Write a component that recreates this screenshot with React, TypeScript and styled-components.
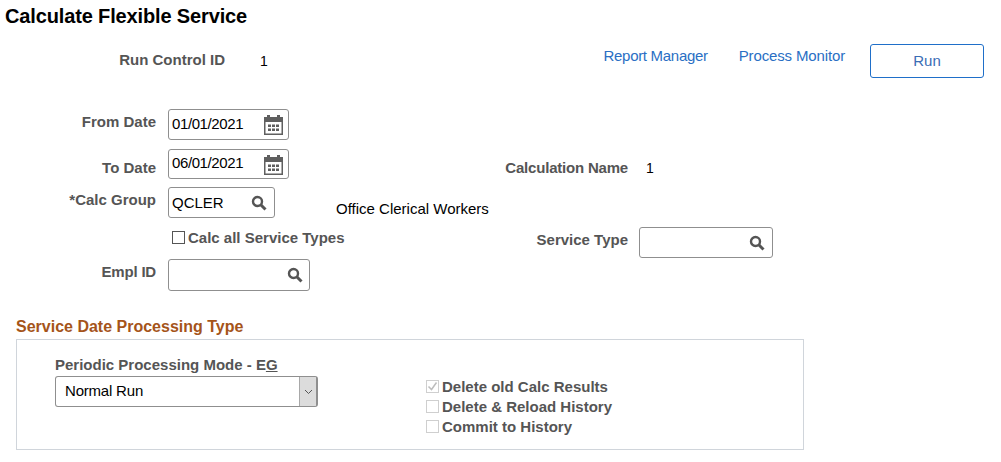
import React from "react";
import styled, { createGlobalStyle } from "styled-components";

const Global = createGlobalStyle`
  html, body { margin: 0; padding: 0; background: #fff; }
  body { font-family: "Liberation Sans", Arial, sans-serif; font-size: 15px; color: #000; }
`;

const Page = styled.div`
  width: 1001px;
  height: 462px;
  overflow: hidden;
  display: flex;
  flex-direction: column;
`;

const Title = styled.h1`
  margin: 0;
  padding: 6px 0 0 5px;
  height: 44px;
  box-sizing: border-box;
  font-size: 20px;
  line-height: 21px;
  font-weight: 700;
  letter-spacing: -0.14px;
  color: #000;
`;

const HeaderRow = styled.div`
  display: grid;
  grid-template-columns: 237px 1fr auto auto auto;
  height: 65px;
  padding-right: 17px;
`;

const HeaderLabel = styled.div`
  padding: 8px 12px 0 0;
  line-height: 16px;
  font-weight: 700;
  color: #555;
  text-align: right;
  white-space: nowrap;
`;

const HeaderValue = styled.div`
  padding: 8px 0 0 23px;
  line-height: 18px;
  font-size: 14px;
`;

const ReportLink = styled.a<{ $gap: number; $tight: number }>`
  color: #2a6fc4;
  line-height: 16px;
  padding-top: 4px;
  margin-right: ${(p) => p.$gap}px;
  letter-spacing: ${(p) => p.$tight}px;
  text-decoration: none;
`;

const RunButton = styled.button`
  width: 114px;
  height: 34px;
  box-sizing: border-box;
  border: 1px solid #1f6fc9;
  border-radius: 3px;
  background: #fff;
  color: #3a6db5;
  font: 15px "Liberation Sans", Arial, sans-serif;
  padding: 0 0 2px;
`;

const FormGrid = styled.div`
  display: grid;
  grid-template-columns: 168px 168px 303px 1fr;
  grid-template-rows: 40px 38px 40px 32px 31px;
`;

const FieldLabel = styled.label<{ $top: number; $right?: number; $tight?: number }>`
  padding: ${(p) => p.$top}px ${(p) => p.$right ?? 12}px 0 0;
  line-height: 16px;
  font-weight: 700;
  color: #555;
  text-align: right;
  white-space: nowrap;
  letter-spacing: ${(p) => p.$tight ?? 0}px;
`;

const FieldBox = styled.div<{ $width: number; $height?: number; $pad: number }>`
  width: ${(p) => p.$width}px;
  height: ${(p) => p.$height ?? 31}px;
  box-sizing: border-box;
  display: flex;
  align-items: center;
  border: 1px solid #8f8f8f;
  border-radius: 3px;
  background: #fff;
  padding-right: ${(p) => p.$pad}px;
`;

const FieldInput = styled.input<{ $tight?: number; $lift?: number }>`
  flex: 1;
  min-width: 0;
  border: 0;
  outline: 0;
  padding: 0 0 ${(p) => p.$lift ?? 0}px 3px;
  background: transparent;
  color: #000;
  font: 15px "Liberation Sans", Arial, sans-serif;
  letter-spacing: ${(p) => p.$tight ?? 0}px;
`;

const Note = styled.div<{ $top: number; $left?: number; $size?: number }>`
  padding: ${(p) => p.$top}px 0 0 ${(p) => p.$left ?? 0}px;
  line-height: 16px;
  font-size: ${(p) => p.$size ?? 15}px;
  white-space: nowrap;
`;

const CheckRow = styled.label<{ $left?: number }>`
  display: flex;
  align-items: center;
  gap: 3px;
  height: 20px;
  padding-left: ${(p) => p.$left ?? 0}px;
  font-weight: 700;
  color: #555;
  white-space: nowrap;
`;

const CheckBox = styled.span<{ $disabled?: boolean }>`
  width: 13px;
  height: 13px;
  box-sizing: border-box;
  flex: none;
  border: 1px solid ${(p) => (p.$disabled ? "#cfcfcf" : "#555")};
  background: #fff;
  display: flex;
`;

const SectionTitle = styled.h2`
  margin: 0;
  padding: 29px 0 0 16px;
  font-size: 16px;
  line-height: 16px;
  font-weight: 700;
  color: #a5541a;
`;

const SectionBox = styled.section`
  margin: 4px 0 0 16px;
  width: 788px;
  height: 111px;
  box-sizing: border-box;
  border: 1px solid #d0d5db;
  display: grid;
  grid-template-columns: 409px 1fr;
`;

const ModeColumn = styled.div`
  padding: 17px 0 0 38px;
`;

const ModeLabel = styled.div`
  line-height: 16px;
  font-weight: 700;
  color: #555;
`;

const Accel = styled.span`
  text-decoration: underline;
`;

const SelectBox = styled.div`
  margin-top: 3px;
  width: 263px;
  height: 31px;
  box-sizing: border-box;
  display: flex;
  border: 1px solid #8f8f8f;
  border-right-width: 2px;
  border-radius: 3px;
  overflow: hidden;
`;

const SelectText = styled.div`
  flex: 1;
  padding-left: 9px;
  line-height: 28px;
  letter-spacing: -0.2px;
`;

const SelectArrow = styled.div`
  width: 16px;
  background: #dcdcdc;
  border-left: 1px solid #a8a8a8;
  display: flex;
  align-items: center;
  justify-content: center;
`;

const OptionColumn = styled.div`
  padding-top: 36px;
`;

const Calendar = () => (
  <svg width="21" height="21" viewBox="0 0 21 21" fill="#5f5f5f">
    <path d="M1 3h19v18H1zM2.500 8v11.500h16V8z" fillRule="evenodd" />
    <rect x="4" y="1" width="3" height="3" />
    <rect x="14" y="1" width="3" height="3" />
    <rect x="5" y="10.500" width="3" height="2.500" />
    <rect x="9" y="10.500" width="3" height="2.500" />
    <rect x="13" y="10.500" width="3" height="2.500" />
    <rect x="5" y="14.500" width="3" height="2.500" />
    <rect x="9" y="14.500" width="3" height="2.500" />
    <rect x="13" y="14.500" width="3" height="2.500" />
  </svg>
);

const Search = () => (
  <svg width="16" height="16" viewBox="0 0 16 16" fill="none" stroke="#555">
    <circle cx="6.500" cy="6.500" r="4.500" strokeWidth="2.400" />
    <path d="M10 10l4.500 4.500" strokeWidth="3" />
  </svg>
);

const Chevron = () => (
  <svg width="9" height="6" viewBox="0 0 9 6" fill="none" stroke="#555">
    <path d="M1 1l3.500 3.500L8 1" />
  </svg>
);

const Tick = () => (
  <svg width="11" height="11" viewBox="0 0 11 11" fill="none" stroke="#bdbdbd" strokeWidth="1.500">
    <path d="M1.500 5.500l3 3 5-7" />
  </svg>
);

export default function App() {
  return (
    <Page>
      <Global />
      <Title>Calculate Flexible Service</Title>
      <HeaderRow>
        <HeaderLabel>Run Control ID</HeaderLabel>
        <HeaderValue>1</HeaderValue>
        <ReportLink href="#" $gap={31} $tight={-0.3}>Report Manager</ReportLink>
        <ReportLink href="#" $gap={25} $tight={-0.14}>Process Monitor</ReportLink>
        <RunButton>Run</RunButton>
      </HeaderRow>
      <FormGrid>
        <FieldLabel $top={5}>From Date</FieldLabel>
        <FieldBox $width={121} $pad={4}>
          <FieldInput readOnly value="01/01/2021" $tight={-0.4} $lift={2} />
          <Calendar />
        </FieldBox>
        <div />
        <div />

        <FieldLabel $top={11}>To Date</FieldLabel>
        <FieldBox $width={121} $height={30} $pad={4}>
          <FieldInput readOnly value="06/01/2021" $tight={-0.4} $lift={3} />
          <Calendar />
        </FieldBox>
        <FieldLabel $top={11} $right={11} $tight={-0.2}>Calculation Name</FieldLabel>
        <Note $top={11} $left={7} $size={14}>1</Note>

        <FieldLabel $top={5}>*Calc Group</FieldLabel>
        <FieldBox $width={107} $pad={7}>
          <FieldInput readOnly value="QCLER" />
          <Search />
        </FieldBox>
        <Note $top={14}>Office Clerical Workers</Note>
        <div />

        <div />
        <CheckRow $left={4}>
          <CheckBox />
          Calc all Service Types
        </CheckRow>
        <FieldLabel $top={5} $right={11}>Service Type</FieldLabel>
        <FieldBox $width={134} $pad={7}>
          <FieldInput readOnly value="" />
          <Search />
        </FieldBox>

        <FieldLabel $top={5} $tight={-0.2}>Empl ID</FieldLabel>
        <FieldBox $width={142} $height={32} $pad={6}>
          <FieldInput readOnly value="" />
          <Search />
        </FieldBox>
        <div />
        <div />
      </FormGrid>
      <SectionTitle>Service Date Processing Type</SectionTitle>
      <SectionBox>
        <ModeColumn>
          <ModeLabel>
            Periodic Processing Mode - E<Accel>G</Accel>
          </ModeLabel>
          <SelectBox>
            <SelectText>Normal Run</SelectText>
            <SelectArrow>
              <Chevron />
            </SelectArrow>
          </SelectBox>
        </ModeColumn>
        <OptionColumn>
          <CheckRow>
            <CheckBox $disabled>
              <Tick />
            </CheckBox>
            Delete old Calc Results
          </CheckRow>
          <CheckRow>
            <CheckBox $disabled />
            Delete &amp; Reload History
          </CheckRow>
          <CheckRow>
            <CheckBox $disabled />
            Commit to History
          </CheckRow>
        </OptionColumn>
      </SectionBox>
    </Page>
  );
}
